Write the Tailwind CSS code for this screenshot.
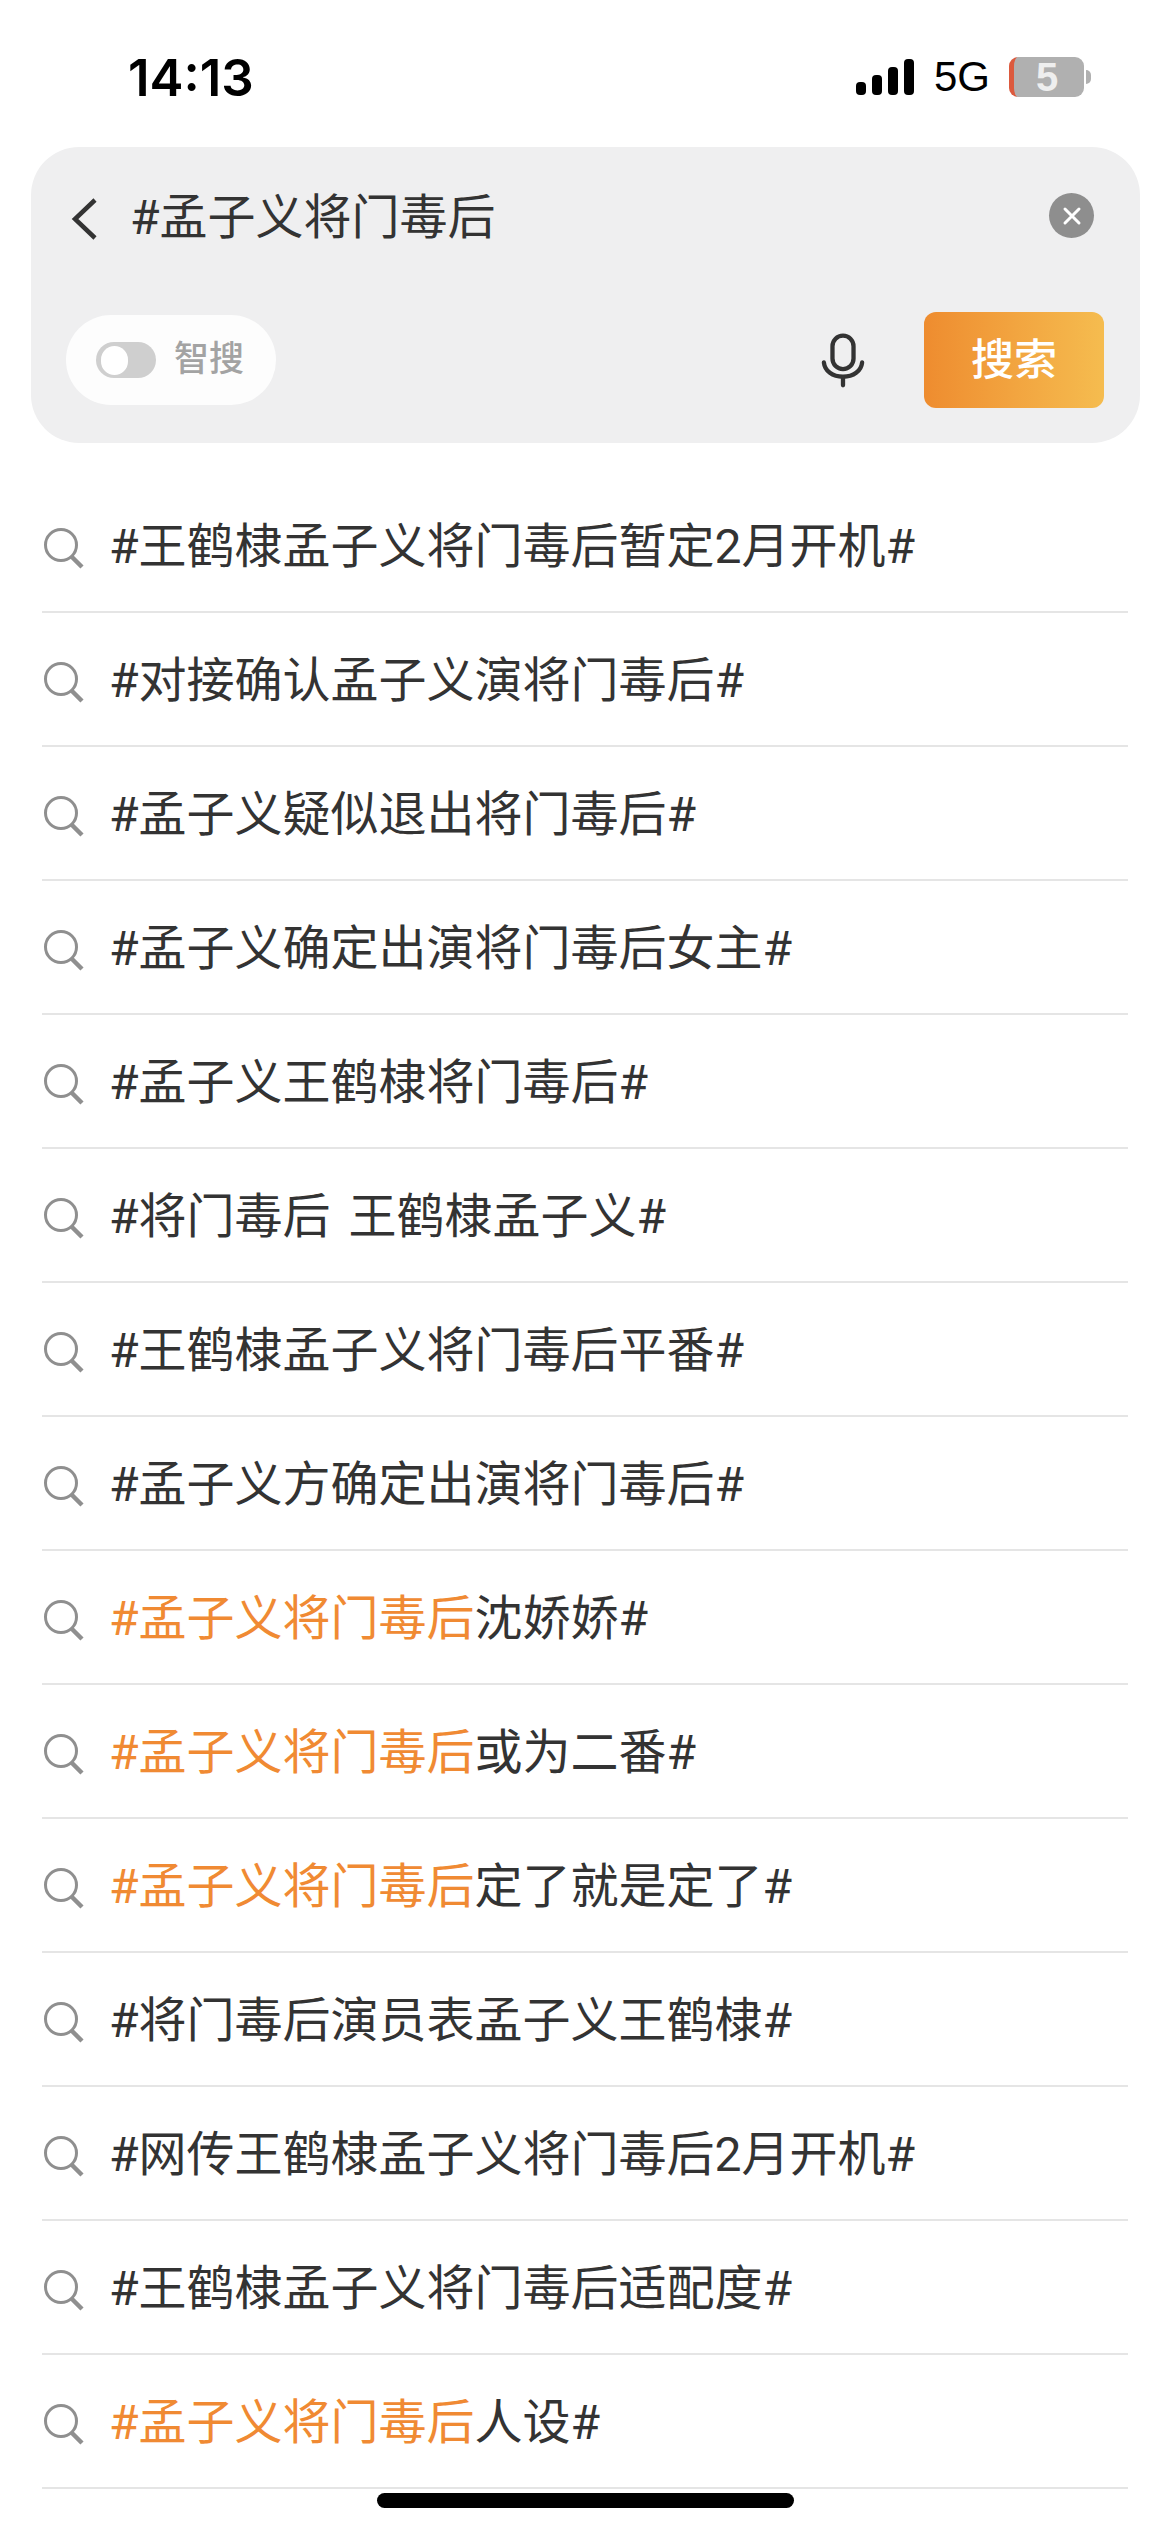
<!DOCTYPE html>
<html lang="zh">
<head>
  <meta charset="UTF-8">
  <meta name="viewport" content="width=device-width, initial-scale=1.0">
  <title>搜索</title>
  <script src="https://cdn.jsdelivr.net/npm/@tailwindcss/browser@4"></script>
</head>
<body class="bg-white text-[#333] font-['Roboto','Noto_Sans_CJK_SC',sans-serif]">
  <div class="w-[1170px] h-[2532px] overflow-hidden relative">
    <!-- status bar -->
    <div class="h-[147px] flex items-start pl-[128px] pr-[79px] text-black">
      <span class="mt-[50px] text-[51px] leading-[56px] font-semibold font-['Inter',sans-serif]">14:13</span>
      <div class="ml-auto mt-[57px] flex items-end h-[40px]">
        <div class="flex items-end gap-[6px] mb-[2px]">
          <div class="w-[10px] h-[13px] rounded-[4px] bg-black"></div>
          <div class="w-[10px] h-[20px] rounded-[4px] bg-black"></div>
          <div class="w-[10px] h-[28px] rounded-[4px] bg-black"></div>
          <div class="w-[10px] h-[36px] rounded-[4px] bg-black"></div>
        </div>
        <span class="ml-[20px] text-[42px] leading-[40px] font-['Liberation_Sans',sans-serif]">5G</span>
        <div class="ml-[19px] w-[75px] h-[40px] rounded-[9px] bg-[#b0b0b0] border-l-[5px] border-[#dc5a3e] flex items-center justify-center pr-[4px] text-[40px] leading-[40px] font-bold text-[#eee] font-['Liberation_Sans',sans-serif]">5</div>
        <div class="ml-[2px] mb-[13px] w-[5px] h-[14px] rounded-r-full bg-[#b0b0b0]"></div>
      </div>
    </div>

    <!-- search panel -->
    <div class="mx-[31px] w-[1109px] h-[296px] rounded-[48px] bg-[#efeff0]">
      <div class="h-[137px] flex items-center pl-[40px] pr-[46px]">
        <svg class="w-[28px] h-[44px] mt-[7px]" viewBox="0 0 28 44" fill="none" stroke="#333" stroke-width="4.5"><path d="M24 3 4 22l20 19"/></svg>
        <span class="ml-[31px] mt-[4px] text-[48px] leading-[60px]">#孟子义将门毒后</span>
        <div class="ml-auto w-[45px] h-[45px] rounded-full bg-[#8e8e8e] flex items-center justify-center">
          <svg class="w-[20px] h-[20px]" viewBox="0 0 20 20" fill="none" stroke="#fff" stroke-width="3" stroke-linecap="round"><path d="M3 3l14 14M17 3 3 17"/></svg>
        </div>
      </div>
      <div class="flex items-center pl-[35px] pr-[36px] pt-[28px]">
        <div class="w-[210px] h-[90px] rounded-[45px] bg-[#fdfdfd] flex items-center pl-[30px]">
          <div class="w-[60px] h-[36px] rounded-full bg-[#cfcfcf] pl-[5px] flex items-center">
            <div class="w-[27px] h-[29px] rounded-full bg-white"></div>
          </div>
          <span class="ml-[18px] text-[35px] leading-[44px] font-medium text-[#a3a3a3]">智搜</span>
        </div>
        <svg class="ml-auto w-[44px] h-[55px]" viewBox="0 0 46 56" fill="none" stroke="#333" stroke-width="4.5" stroke-linecap="round"><rect x="12" y="2" width="22" height="35" rx="11"/><path d="M3 30c1 9 9 15 20 15s19-6 20-15M23 45v9"/></svg>
        <div class="ml-[59px] w-[180px] h-[96px] rounded-[12px] bg-gradient-to-r from-[#ee8c2f] to-[#f5bc4f] flex items-center justify-center text-white text-[43px] leading-[56px] font-medium">搜索</div>
      </div>
    </div>

    <!-- suggestions -->
    <ul class="mt-[36px] mx-[42px] w-[1086px]">
      <li class="h-[134px] border-b-2 border-[#e5e5e5] flex items-center gap-[25px]">
        <svg class="w-[42px] h-[42px] shrink-0 mt-[8px]" viewBox="0 0 42 42" fill="none" stroke="#8f8f8f"><circle cx="19" cy="17" r="15.5" stroke-width="3"/><path d="M30 29l10 10" stroke-width="4.5"/></svg>
        <span class="text-[48px] leading-[60px] mt-[3px]">#王鹤棣孟子义将门毒后暂定2月开机#</span>
      </li>
      <li class="h-[134px] border-b-2 border-[#e5e5e5] flex items-center gap-[25px]">
        <svg class="w-[42px] h-[42px] shrink-0 mt-[8px]" viewBox="0 0 42 42" fill="none" stroke="#8f8f8f"><circle cx="19" cy="17" r="15.5" stroke-width="3"/><path d="M30 29l10 10" stroke-width="4.5"/></svg>
        <span class="text-[48px] leading-[60px] mt-[3px]">#对接确认孟子义演将门毒后#</span>
      </li>
      <li class="h-[134px] border-b-2 border-[#e5e5e5] flex items-center gap-[25px]">
        <svg class="w-[42px] h-[42px] shrink-0 mt-[8px]" viewBox="0 0 42 42" fill="none" stroke="#8f8f8f"><circle cx="19" cy="17" r="15.5" stroke-width="3"/><path d="M30 29l10 10" stroke-width="4.5"/></svg>
        <span class="text-[48px] leading-[60px] mt-[3px]">#孟子义疑似退出将门毒后#</span>
      </li>
      <li class="h-[134px] border-b-2 border-[#e5e5e5] flex items-center gap-[25px]">
        <svg class="w-[42px] h-[42px] shrink-0 mt-[8px]" viewBox="0 0 42 42" fill="none" stroke="#8f8f8f"><circle cx="19" cy="17" r="15.5" stroke-width="3"/><path d="M30 29l10 10" stroke-width="4.5"/></svg>
        <span class="text-[48px] leading-[60px] mt-[3px]">#孟子义确定出演将门毒后女主#</span>
      </li>
      <li class="h-[134px] border-b-2 border-[#e5e5e5] flex items-center gap-[25px]">
        <svg class="w-[42px] h-[42px] shrink-0 mt-[8px]" viewBox="0 0 42 42" fill="none" stroke="#8f8f8f"><circle cx="19" cy="17" r="15.5" stroke-width="3"/><path d="M30 29l10 10" stroke-width="4.5"/></svg>
        <span class="text-[48px] leading-[60px] mt-[3px]">#孟子义王鹤棣将门毒后#</span>
      </li>
      <li class="h-[134px] border-b-2 border-[#e5e5e5] flex items-center gap-[25px]">
        <svg class="w-[42px] h-[42px] shrink-0 mt-[8px]" viewBox="0 0 42 42" fill="none" stroke="#8f8f8f"><circle cx="19" cy="17" r="15.5" stroke-width="3"/><path d="M30 29l10 10" stroke-width="4.5"/></svg>
        <span class="text-[48px] leading-[60px] mt-[3px] whitespace-pre [word-spacing:6px]">#将门毒后 王鹤棣孟子义#</span>
      </li>
      <li class="h-[134px] border-b-2 border-[#e5e5e5] flex items-center gap-[25px]">
        <svg class="w-[42px] h-[42px] shrink-0 mt-[8px]" viewBox="0 0 42 42" fill="none" stroke="#8f8f8f"><circle cx="19" cy="17" r="15.5" stroke-width="3"/><path d="M30 29l10 10" stroke-width="4.5"/></svg>
        <span class="text-[48px] leading-[60px] mt-[3px]">#王鹤棣孟子义将门毒后平番#</span>
      </li>
      <li class="h-[134px] border-b-2 border-[#e5e5e5] flex items-center gap-[25px]">
        <svg class="w-[42px] h-[42px] shrink-0 mt-[8px]" viewBox="0 0 42 42" fill="none" stroke="#8f8f8f"><circle cx="19" cy="17" r="15.5" stroke-width="3"/><path d="M30 29l10 10" stroke-width="4.5"/></svg>
        <span class="text-[48px] leading-[60px] mt-[3px]">#孟子义方确定出演将门毒后#</span>
      </li>
      <li class="h-[134px] border-b-2 border-[#e5e5e5] flex items-center gap-[25px]">
        <svg class="w-[42px] h-[42px] shrink-0 mt-[8px]" viewBox="0 0 42 42" fill="none" stroke="#8f8f8f"><circle cx="19" cy="17" r="15.5" stroke-width="3"/><path d="M30 29l10 10" stroke-width="4.5"/></svg>
        <span class="text-[48px] leading-[60px] mt-[3px]"><span class="text-[#f08a33]">#孟子义将门毒后</span>沈娇娇#</span>
      </li>
      <li class="h-[134px] border-b-2 border-[#e5e5e5] flex items-center gap-[25px]">
        <svg class="w-[42px] h-[42px] shrink-0 mt-[8px]" viewBox="0 0 42 42" fill="none" stroke="#8f8f8f"><circle cx="19" cy="17" r="15.5" stroke-width="3"/><path d="M30 29l10 10" stroke-width="4.5"/></svg>
        <span class="text-[48px] leading-[60px] mt-[3px]"><span class="text-[#f08a33]">#孟子义将门毒后</span>或为二番#</span>
      </li>
      <li class="h-[134px] border-b-2 border-[#e5e5e5] flex items-center gap-[25px]">
        <svg class="w-[42px] h-[42px] shrink-0 mt-[8px]" viewBox="0 0 42 42" fill="none" stroke="#8f8f8f"><circle cx="19" cy="17" r="15.5" stroke-width="3"/><path d="M30 29l10 10" stroke-width="4.5"/></svg>
        <span class="text-[48px] leading-[60px] mt-[3px]"><span class="text-[#f08a33]">#孟子义将门毒后</span>定了就是定了#</span>
      </li>
      <li class="h-[134px] border-b-2 border-[#e5e5e5] flex items-center gap-[25px]">
        <svg class="w-[42px] h-[42px] shrink-0 mt-[8px]" viewBox="0 0 42 42" fill="none" stroke="#8f8f8f"><circle cx="19" cy="17" r="15.5" stroke-width="3"/><path d="M30 29l10 10" stroke-width="4.5"/></svg>
        <span class="text-[48px] leading-[60px] mt-[3px]">#将门毒后演员表孟子义王鹤棣#</span>
      </li>
      <li class="h-[134px] border-b-2 border-[#e5e5e5] flex items-center gap-[25px]">
        <svg class="w-[42px] h-[42px] shrink-0 mt-[8px]" viewBox="0 0 42 42" fill="none" stroke="#8f8f8f"><circle cx="19" cy="17" r="15.5" stroke-width="3"/><path d="M30 29l10 10" stroke-width="4.5"/></svg>
        <span class="text-[48px] leading-[60px] mt-[3px]">#网传王鹤棣孟子义将门毒后2月开机#</span>
      </li>
      <li class="h-[134px] border-b-2 border-[#e5e5e5] flex items-center gap-[25px]">
        <svg class="w-[42px] h-[42px] shrink-0 mt-[8px]" viewBox="0 0 42 42" fill="none" stroke="#8f8f8f"><circle cx="19" cy="17" r="15.5" stroke-width="3"/><path d="M30 29l10 10" stroke-width="4.5"/></svg>
        <span class="text-[48px] leading-[60px] mt-[3px]">#王鹤棣孟子义将门毒后适配度#</span>
      </li>
      <li class="h-[134px] border-b-2 border-[#e5e5e5] flex items-center gap-[25px]">
        <svg class="w-[42px] h-[42px] shrink-0 mt-[8px]" viewBox="0 0 42 42" fill="none" stroke="#8f8f8f"><circle cx="19" cy="17" r="15.5" stroke-width="3"/><path d="M30 29l10 10" stroke-width="4.5"/></svg>
        <span class="text-[48px] leading-[60px] mt-[3px]"><span class="text-[#f08a33]">#孟子义将门毒后</span>人设#</span>
      </li>
    </ul>

    <!-- home indicator -->
    <div class="absolute left-[377px] top-[2493px] w-[417px] h-[15px] rounded-full bg-black"></div>
  </div>
</body>
</html>
